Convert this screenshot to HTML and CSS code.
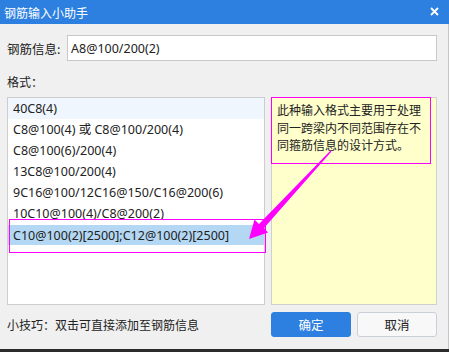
FILE: index.html
```html
<!DOCTYPE html>
<html lang="zh-CN">
<head>
    <meta charset="UTF-8">
    <title>钢筋输入小助手</title>
    <link rel="stylesheet" href="styles.css">
</head>
<body>
    <div class="window">
        <div class="titlebar">
            <span>钢筋输入小助手</span>
            <svg class="close" width="9" height="9" viewBox="0 0 9 9">
                <path d="M1 1L8 8M8 1L1 8" stroke="#fff" stroke-width="1.8"/>
            </svg>
        </div>
        <div class="body">
            <div class="field">
                <label>钢筋信息:</label>
                <input type="text" value="A8@100/200(2)">
            </div>
            <div class="caption">格式：</div>
            <div class="main">
                <ul class="list">
                    <li class="hover">40C8(4)</li>
                    <li>C8@100(4) 或 C8@100/200(4)</li>
                    <li>C8@100(6)/200(4)</li>
                    <li>13C8@100/200(4)</li>
                    <li>9C16@100/12C16@150/C16@200(6)</li>
                    <li>10C10@100(4)/C8@200(2)</li>
                    <li class="selected">C10@100(2)[2500];C12@100(2)[2500]</li>
                </ul>
                <div class="panel">
                    <div class="note">此种输入格式主要用于处理同一跨梁内不同范围存在不同箍筋信息的设计方式。</div>
                </div>
                <div class="mark"></div>
                <svg class="arrow" width="430" height="208" viewBox="0 0 430 208">
                    <polygon points="324.5,54.5 257,131 261,135.5 242,142 247.5,122.5 252,127 323.5,53.5" fill="#f0f"/>
                </svg>
            </div>
            <div class="footer">
                <span class="tip">小技巧：双击可直接添加至钢筋信息</span>
                <button class="btn primary">确定</button>
                <button class="btn">取消</button>
            </div>
        </div>
    </div>
</body>
</html>
```

FILE: styles.css
```css
body {
    margin: 0;
    background: #2b2b2b;
    font-family: "Noto Sans CJK SC", sans-serif;
    font-size: 12px;
    color: #222;
}
.window {
    width: 449px;
    height: 349px;
    display: flex;
    flex-direction: column;
}
.titlebar {
    height: 24px;
    background: #2d80df;
    color: #fff;
    display: flex;
    align-items: center;
    justify-content: space-between;
    padding: 0 10px 0 4px;
}
.close {
    margin-top: -1px;
}
.body {
    flex: 1;
    background: #f0f0f0;
    border-right: 1px solid #c6c6c6;
    padding: 11px 11px 0 7px;
}
.field {
    display: flex;
    align-items: center;
    height: 26px;
}
.field label {
    width: 60px;
    font-size: 12.5px;
}
.field input {
    flex: 1;
    height: 26px;
    box-sizing: border-box;
    border: 1px solid #c8c8c8;
    background: #fff;
    padding: 0 3px;
    margin: 0;
    font-family: "Noto Sans", "Noto Sans CJK SC", sans-serif;
    font-size: 12.5px;
    color: #222;
    outline: none;
}
.caption {
    line-height: 20px;
    margin: 11px 0 5px;
}
.main {
    position: relative;
    display: flex;
    gap: 6px;
    height: 208px;
}
.list {
    width: 258px;
    box-sizing: border-box;
    margin: 0;
    padding: 0;
    list-style: none;
    background: #fff;
    border: 1px solid #cdcdcd;
    font-family: "Noto Sans", "Noto Sans CJK SC", sans-serif;
    font-size: 12.5px;
}
.list li {
    height: 21px;
    line-height: 21px;
    padding-left: 5px;
    white-space: nowrap;
}
.list li.hover {
    background: #eff6fd;
}
.list li.selected {
    background: #b4d8f4;
    margin-top: 1px;
    height: 20px;
    line-height: 21px;
}
.panel {
    width: 166px;
    box-sizing: border-box;
    background: #ffffcc;
    border: 1px solid #d0d0d0;
}
.note {
    margin: -1px 0 0 -1px;
    width: 160px;
    height: 67px;
    box-sizing: border-box;
    border: 1px solid #f0f;
    padding: 3px 4px 0 5px;
    line-height: 17.5px;
}
.mark {
    position: absolute;
    left: 2px;
    top: 122px;
    width: 257px;
    height: 34px;
    box-sizing: border-box;
    border: 1px solid #f0f;
}
.arrow {
    position: absolute;
    left: 0;
    top: 0;
}
.footer {
    display: flex;
    align-items: center;
    gap: 6px;
    margin-top: 7px;
}
.tip {
    flex: 1;
}
.btn {
    width: 80px;
    height: 25px;
    border: 1px solid #c9d0da;
    border-radius: 3px;
    background: #f8f8f8;
    font-family: "Noto Sans CJK SC", sans-serif;
    font-size: 12.5px;
    color: #222;
    padding: 0;
}
.btn.primary {
    background: #2d80df;
    border-color: #2d80df;
    color: #fff;
}
```
